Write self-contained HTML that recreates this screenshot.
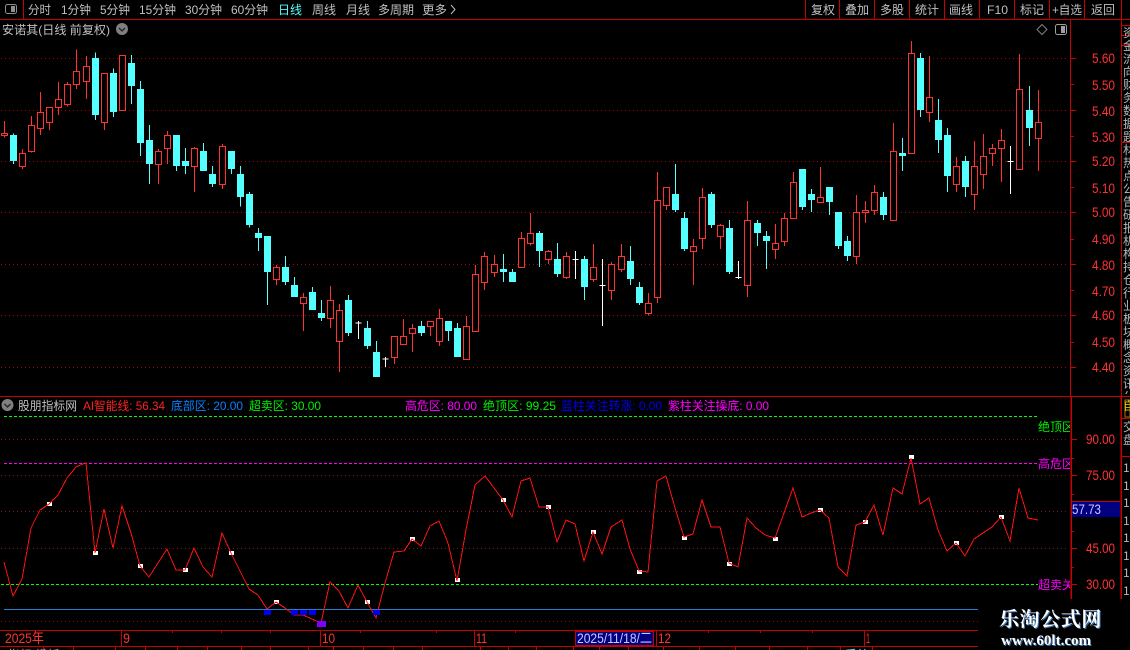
<!DOCTYPE html>
<html>
<head>
<meta charset="utf-8">
<style>
html,body{margin:0;padding:0;background:#000;width:1130px;height:650px;overflow:hidden}
svg{position:absolute;left:0;top:0}
text{font-family:"Liberation Sans","Noto Sans CJK SC",sans-serif;font-size:12px}
.t{fill:#c0c0c0}
.d{font-size:14px;fill:#ff3232}
.col{position:absolute;left:1123px;width:7px;overflow:hidden;font:12px/13px "Noto Sans CJK SC",sans-serif;color:#b8b8b8}
.col div{width:12px;word-break:break-all}
.wm{position:absolute;left:999px;top:606px;width:110px;font:bold 20px/24px "Noto Serif CJK SC","Noto Sans CJK SC",serif;color:#fff;text-shadow:1px 1px 0 #3a78b8;white-space:nowrap;letter-spacing:.6px}
.wm2{position:absolute;left:1001px;top:634px;font:bold 15px/15px "Liberation Serif",serif;color:#fff;text-shadow:1px 1px 0 #3a78b8;white-space:nowrap}
</style>
</head>
<body>
<svg width="1130" height="650" viewBox="0 0 1130 650" xmlns="http://www.w3.org/2000/svg">
<defs>
<clipPath id="c1"><rect x="0" y="400" width="1070" height="200"/></clipPath>
</defs>

<!-- upper grid -->
<g stroke="#a80000" stroke-width="1" stroke-dasharray="1 3" shape-rendering="crispEdges">
<path d="M1 58.5H1066M1 110.5H1066M1 161.5H1066M1 212.5H1066M1 264.5H1066M1 315.5H1066M1 367.5H1066"/>
</g>

<!-- candles -->
<g shape-rendering="crispEdges" fill="none">
<g transform="translate(0,0) scale(.33333) translate(.5,0)">
<path stroke="#ff3232" stroke-width="3" d="M13 363V413M67 447V507M94 348V458M121 276V405M148 322V390M175 246V345M202 246V320M229 148V267M259 168V297M313 220V390M367 166V332M475 447V552M502 393V492M583 441V576M667 432V567"/>
<path stroke="#ff3232" stroke-width="3" fill="#000" d="M13 400m-9 0h18V407h-18zM67 460m-9 0h18V500h-18zM94 376m-9 0h18V455h-18zM121 337m-9 0h18V386h-18zM148 322m-9 0h18V368h-18zM175 298m-9 0h18V323h-18zM202 253m-9 0h18V314h-18zM229 214m-9 0h18V254h-18zM259 199m-9 0h18V245h-18zM313 220m-9 0h18V368h-18zM367 166m-9 0h18V332h-18zM475 454m-9 0h18V494h-18zM502 406m-9 0h18V446h-18zM583 445m-9 0h18V500h-18zM667 439m-9 0h18V554h-18z"/>
<path stroke="#54ffff" stroke-width="3" d="M40 400V492M286 158V360M340 205V351M394 165V312M421 243V468M448 375V552M529 405V513M556 444V522M610 429V513M637 498V561M694 453V522M721 498V620M748 576V683"/>
<path stroke="#54ffff" stroke-width="21" d="M40 405V483M286 174V345M340 219V336M394 189V258M421 267V429M448 420V492M529 405V498M556 483V498M610 453V513M637 522V552M694 453V507M721 522V591M748 582V675"/>
</g>
<g transform="translate(240,200) scale(.33333) translate(.5,0)">
<path stroke="#ff3232" stroke-width="3" d="M109 195V255M190 279V393M271 258V384M298 312V516M463 409V492M490 357V434M517 372V456M571 364V408M598 327V438M679 348V479M706 195V395M733 156V270M763 165V231"/>
<path stroke="#ff3232" stroke-width="3" fill="#000" d="M109 202m-9 0h18V239h-18zM190 292m-9 0h18V311h-18zM271 301m-9 0h18V356h-18zM298 331m-9 0h18V425h-18zM463 409m-9 0h18V473h-18zM490 409m-9 0h18V434h-18zM517 385m-9 0h18V401h-18zM571 364m-9 0h18V380h-18zM598 355m-9 0h18V425h-18zM679 379m-9 0h18V479h-18zM706 223m-9 0h18V395h-18zM733 169m-9 0h18V248h-18zM763 193m-9 0h18V218h-18z"/>
<path stroke="#54ffff" stroke-width="3" d="M55 84V153M82 108V315M136 168V255M163 231V291M217 261V330M244 300V363M325 285V408M382 363V447M409 423V531M544 363V408M625 363V423M652 369V471"/>
<path stroke="#54ffff" stroke-width="21" d="M55 99V114M82 108V216M136 201V246M163 255V291M217 276V330M244 339V354M325 300V399M382 384V438M409 456V531M544 378V399M625 363V393M652 384V471"/>
<path stroke="#fff" stroke-width="3" d="M355 363V417M346 369H364M436 471V501M427 477H445"/>
</g>
<g transform="translate(480,140) scale(.33333) translate(.5,0)">
<path stroke="#ff3232" stroke-width="3" d="M124 276V383M151 219V317M205 330V372M259 336V417M340 312V426M394 366V480M424 312V396M505 459V526M532 96V489M559 142V210M640 297V435M667 144V327M721 252V327M802 183V471M886 252V357"/>
<path stroke="#ff3232" stroke-width="3" fill="#000" d="M124 295m-9 0h18V383h-18zM151 280m-9 0h18V311h-18zM205 334m-9 0h18V359h-18zM259 349m-9 0h18V413h-18zM340 382m-9 0h18V419h-18zM394 373m-9 0h18V452h-18zM424 349m-9 0h18V389h-18zM505 490m-9 0h18V521h-18zM532 181m-9 0h18V473h-18zM559 142m-9 0h18V197h-18zM640 319m-9 0h18V335h-18zM667 172m-9 0h18V296h-18zM721 256m-9 0h18V290h-18zM802 241m-9 0h18V437h-18zM886 310m-9 0h18V329h-18z"/>
<path stroke="#54ffff" stroke-width="3" d="M70 342V426M97 387V426M178 273V381M232 309V411M313 348V480M451 318V435M478 426V495M586 72V216M613 216V333M694 156V264M748 240V402M832 240V318M859 273V387"/>
<path stroke="#54ffff" stroke-width="21" d="M70 387V396M97 396V426M178 279V333M232 357V402M313 357V441M451 363V417M478 441V489M586 162V210M613 234V327M694 162V255M748 264V396M832 249V279M859 288V303"/>
<path stroke="#fff" stroke-width="3" d="M286 333V417M277 358H295M367 357V558M358 436H376M775 363V417M766 412H784"/>
</g>
<g transform="translate(780,120) scale(.33333) translate(.5,0)">
<path stroke="#ff3232" stroke-width="3" d="M13 279V378M40 156V296M121 141V248M229 225V432M256 243V309M283 195V285M340 9V302"/>
<path stroke="#ff3232" stroke-width="3" fill="#000" d="M13 295m-9 0h18V365h-18zM40 187m-9 0h18V296h-18zM121 232m-9 0h18V248h-18zM229 277m-9 0h18V410h-18zM256 271m-9 0h18V278h-18zM283 217m-9 0h18V272h-18zM340 94m-9 0h18V302h-18z"/>
<path stroke="#54ffff" stroke-width="3" d="M67 147V270M94 207V276M148 201V285M175 276V387M202 348V423M310 216V300M367 54V153"/>
<path stroke="#54ffff" stroke-width="21" d="M67 147V261M94 222V240M148 201V246M175 276V378M202 363V408M310 231V285M367 99V108"/>
</g>
<g transform="translate(780,0) scale(.33333) translate(.5,0)">
<path stroke="#ff3232" stroke-width="3" d="M394 123V461M448 168V366M529 471V576M583 423V630M610 402V567M637 432V498M664 387V546M718 162V509M775 270V513"/>
<path stroke="#ff3232" stroke-width="3" fill="#000" d="M394 160m-9 0h18V461h-18zM448 292m-9 0h18V338h-18zM529 499m-9 0h18V554h-18zM583 499m-9 0h18V584h-18zM610 469m-9 0h18V524h-18zM637 445m-9 0h18V461h-18zM664 421m-9 0h18V446h-18zM718 268m-9 0h18V509h-18zM775 367m-9 0h18V415h-18z"/>
<path stroke="#54ffff" stroke-width="3" d="M421 159V351M475 297V459M502 384V576M556 468V591M748 258V438"/>
<path stroke="#54ffff" stroke-width="21" d="M421 174V330M475 360V420M502 405V528M556 483V561M748 330V384"/>
<path stroke="#fff" stroke-width="3" d="M691 438V582M682 484H700"/>
</g>
</g>

<!-- frame lines -->
<g stroke="#c80000" stroke-width="1" shape-rendering="crispEdges" fill="none">
<path d="M0 19.5H1130"/>
<path d="M23.5 0V19M805.5 0V19M839.5 0V19M874.5 0V19M909.5 0V19M944.5 0V19M979.5 0V19M1014.5 0V19M1049.5 0V19M1084.5 0V19M1121.5 0V396"/>
<path d="M1070.5 19V396"/>
<path d="M0 396.5H1130"/>
<path d="M1122 25.5H1130M1122 35.5H1130M1122 45.5H1130M1122 142.5H1130M1122 418.5H1130M1122 456.5H1130"/>
<path d="M1071 58.5H1076M1071 84.5H1074M1071 110.5H1076M1071 136.5H1074M1071 161.5H1076M1071 187.5H1074M1071 212.5H1076M1071 239.5H1074M1071 264.5H1076M1071 290.5H1074M1071 315.5H1076M1071 342.5H1074M1071 367.5H1076"/>
<path stroke-width="1.5" d="M1071 397V599M1121 397V599"/>
<path d="M1071 439.5H1077M1071 458.5H1074M1071 475.5H1077M1071 494.5H1074M1071 531.5H1074M1071 548.5H1077M1071 567.5H1074M1071 584.5H1077"/>
<path d="M0 630.5H978M0 646.5H978"/>
<path d="M121.5 630V646M320.5 630V646M474.5 630V646M656.5 630V646M864.5 630V646"/>
<path d="M172.5 630V633M221.5 630V633M270.5 630V633M360.5 630V633M436.5 630V633M515.5 630V633M708.5 630V633M760.5 630V633M812.5 630V633"/>
<path d="M43.5 646V650M73.5 646V650M115.5 646V650M145.5 646V650M177.5 646V650M207.5 646V650M241.5 646V650M270.5 646V650M308.5 646V650M333.5 646V650M363.5 646V650M393.5 646V650M422.5 646V650M480.5 646V650M508.5 646V650M536.5 646V650M573.5 646V650M599.5 646V650M628.5 646V650M663.5 646V650M699.5 646V650M735.5 646V650M769.5 646V650M807.5 646V650M840.5 646V650M872.5 646V650"/>
</g>

<!-- top toolbar icon -->
<rect x="5.5" y="4.5" width="11" height="9" rx="2" fill="#000" stroke="#909090"/>
<rect x="11" y="6" width="4" height="6" fill="#909090"/>
<!-- toolbar text -->
<g class="t">
<text x="28" y="14" textLength="23" lengthAdjust="spacingAndGlyphs">分时</text>
<text x="61" y="14" textLength="30" lengthAdjust="spacingAndGlyphs">1分钟</text>
<text x="100" y="14" textLength="30" lengthAdjust="spacingAndGlyphs">5分钟</text>
<text x="139" y="14" textLength="37" lengthAdjust="spacingAndGlyphs">15分钟</text>
<text x="185" y="14" textLength="37" lengthAdjust="spacingAndGlyphs">30分钟</text>
<text x="231" y="14" textLength="37" lengthAdjust="spacingAndGlyphs">60分钟</text>
<text x="278" y="14" textLength="24" lengthAdjust="spacingAndGlyphs" style="fill:#54ffff">日线</text>
<text x="312" y="14" textLength="24" lengthAdjust="spacingAndGlyphs">周线</text>
<text x="346" y="14" textLength="24" lengthAdjust="spacingAndGlyphs">月线</text>
<text x="378" y="14" textLength="36" lengthAdjust="spacingAndGlyphs">多周期</text>
<text x="422" y="14" textLength="25" lengthAdjust="spacingAndGlyphs">更多</text>
<text x="811" y="14" textLength="24" lengthAdjust="spacingAndGlyphs">复权</text>
<text x="845" y="14" textLength="24" lengthAdjust="spacingAndGlyphs">叠加</text>
<text x="880" y="14" textLength="24" lengthAdjust="spacingAndGlyphs">多股</text>
<text x="915" y="14" textLength="24" lengthAdjust="spacingAndGlyphs">统计</text>
<text x="949" y="14" textLength="24" lengthAdjust="spacingAndGlyphs">画线</text>
<text x="987" y="14" textLength="21" lengthAdjust="spacingAndGlyphs">F10</text>
<text x="1020" y="14" textLength="24" lengthAdjust="spacingAndGlyphs">标记</text>
<text x="1052" y="14" textLength="30" lengthAdjust="spacingAndGlyphs">+自选</text>
<text x="1091" y="14" textLength="24" lengthAdjust="spacingAndGlyphs">返回</text>
<text x="2" y="34" textLength="108" lengthAdjust="spacingAndGlyphs">安诺其(日线 前复权)</text>
</g>
<path d="M451 5L455 9.5L451 14" fill="none" stroke="#c0c0c0"/>
<circle cx="122" cy="29" r="6" fill="#808080"/>
<path d="M119 28L122 31L125 28" fill="none" stroke="#222" stroke-width="1.3"/>
<path d="M1042 24.5L1047 29.5L1042 34.5L1037 29.5Z" fill="none" stroke="#808080"/>
<rect x="1055.5" y="24.5" width="11" height="10" rx="2" fill="none" stroke="#a0a0a0"/>
<rect x="1061" y="26" width="4" height="7" fill="#a0a0a0"/>

<!-- upper price labels -->
<g class="d">
<text x="1092" y="63" textLength="23" lengthAdjust="spacingAndGlyphs" class="d">5.60</text>
<text x="1092" y="90" textLength="23" lengthAdjust="spacingAndGlyphs" class="d">5.50</text>
<text x="1092" y="116" textLength="23" lengthAdjust="spacingAndGlyphs" class="d">5.40</text>
<text x="1092" y="142" textLength="23" lengthAdjust="spacingAndGlyphs" class="d">5.30</text>
<text x="1092" y="166" textLength="23" lengthAdjust="spacingAndGlyphs" class="d">5.20</text>
<text x="1092" y="193" textLength="23" lengthAdjust="spacingAndGlyphs" class="d">5.10</text>
<text x="1092" y="217" textLength="23" lengthAdjust="spacingAndGlyphs" class="d">5.00</text>
<text x="1092" y="244" textLength="23" lengthAdjust="spacingAndGlyphs" class="d">4.90</text>
<text x="1092" y="270" textLength="23" lengthAdjust="spacingAndGlyphs" class="d">4.80</text>
<text x="1092" y="296" textLength="23" lengthAdjust="spacingAndGlyphs" class="d">4.70</text>
<text x="1092" y="320" textLength="23" lengthAdjust="spacingAndGlyphs" class="d">4.60</text>
<text x="1092" y="347" textLength="23" lengthAdjust="spacingAndGlyphs" class="d">4.50</text>
<text x="1092" y="372" textLength="23" lengthAdjust="spacingAndGlyphs" class="d">4.40</text>
</g>

<!-- lower legend -->
<circle cx="7.5" cy="405" r="6" fill="#808080"/>
<path d="M4.5 404L7.5 407L10.5 404" fill="none" stroke="#222" stroke-width="1.3"/>
<text x="18" y="410" textLength="59" lengthAdjust="spacingAndGlyphs" fill="#c0c0c0">股朋指标网</text>
<text x="83" y="410" textLength="82" lengthAdjust="spacingAndGlyphs" fill="#ff2020">AI智能线: 56.34</text>
<text x="171" y="410" textLength="72" lengthAdjust="spacingAndGlyphs" fill="#0a80ff">底部区: 20.00</text>
<text x="249" y="410" textLength="72" lengthAdjust="spacingAndGlyphs" fill="#00f000">超卖区: 30.00</text>
<text x="405" y="410" textLength="72" lengthAdjust="spacingAndGlyphs" fill="#ff00ff">高危区: 80.00</text>
<text x="483" y="410" textLength="73" lengthAdjust="spacingAndGlyphs" fill="#00f000">绝顶区: 99.25</text>
<text x="561" y="410" textLength="101" lengthAdjust="spacingAndGlyphs" fill="#0000f0">蓝柱关注转涨: 0.00</text>
<text x="668" y="410" textLength="101" lengthAdjust="spacingAndGlyphs" fill="#ff00ff">紫柱关注操底: 0.00</text>

<!-- lower grid -->
<g stroke="#7c1414" stroke-dasharray="1 3" shape-rendering="crispEdges">
<path d="M1 439.5H1068M1 475.5H1068M1 511.5H1068M1 548.5H1068M1 621.5H978"/>
</g>
<g stroke-dasharray="3 2" shape-rendering="crispEdges">
<path stroke="#00ff00" d="M4 416.5H1038M1 584.5H1038"/>
<path stroke="#ff00ff" d="M4 463.5H1038"/>
</g>
<path d="M4 609.5H978" stroke="#2080d0" shape-rendering="crispEdges"/>

<!-- markers -->
<g fill="#fff" shape-rendering="crispEdges">
<rect x="47" y="502" width="5" height="4"/><rect x="93" y="551" width="5" height="4"/><rect x="138" y="564" width="5" height="4"/><rect x="183" y="568" width="5" height="4"/><rect x="229" y="551" width="5" height="4"/><rect x="274" y="600" width="5" height="4"/><rect x="365" y="600" width="5" height="4"/><rect x="410" y="537" width="5" height="4"/><rect x="455" y="578" width="5" height="4"/><rect x="501" y="498" width="5" height="4"/><rect x="546" y="505" width="5" height="4"/><rect x="591" y="530" width="5" height="4"/><rect x="637" y="570" width="5" height="4"/><rect x="682" y="536" width="5" height="4"/><rect x="727" y="562" width="5" height="4"/><rect x="773" y="537" width="5" height="4"/><rect x="818" y="508" width="5" height="4"/><rect x="863" y="520" width="5" height="4"/><rect x="909" y="455" width="5" height="4"/><rect x="954" y="541" width="5" height="4"/><rect x="999" y="515" width="5" height="4"/>
</g>

<!-- indicator line -->
<polyline fill="none" stroke="#ff1010" stroke-width="1" shape-rendering="crispEdges" points="4,562 13,596 22,579 31,528 40,510 49,504 58,495 67,478 76,467 85,463 86,463 95,553 104,509 113,548 122,506 131,533 140,566 149,577 158,563 167,549 176,570 185,570 194,548 203,567 212,577 222,533 231,553 240,571 249,589 258,595 267,609 276,602 285,608 294,615 303,615 312,619 321,623 330,582 339,591 348,608 358,585 367,602 376,618 385,583 394,552 404,551 412,539 421,546 430,526 439,521 448,543 457,581 466,530 475,485 485,476 494,488 503,500 512,517 521,481 530,478 539,507 548,507 557,542 566,520 575,524 584,561 593,532 602,554 611,527 622,520 630,549 639,571 648,572 657,481 666,476 675,508 684,537 693,534 702,500 711,527 720,527 729,563 738,567 747,518 756,528 765,535 775,538 793,488 802,517 811,513 820,510 829,518 838,567 847,576 856,525 865,522 874,505 883,535 893,488 902,494 911,458 920,504 929,498 938,530 947,551 956,543 965,556 974,539 983,533 992,527 1001,517 1010,541 1019,488 1028,518 1038,520"/>

<!-- blue / purple squares -->
<g shape-rendering="crispEdges">
<path fill="#0000f0" d="M264 610h7v5h-7zM291 610h7v5h-7zM300 610h7v5h-7zM309 610h7v5h-7zM373 610h7v5h-7z"/>
<rect x="317" y="621" width="9" height="6" fill="#8000ff"/>
</g>

<!-- end labels -->
<g clip-path="url(#c1)">
<text x="1038" y="431" fill="#00f000">绝顶区</text>
<text x="1038" y="468" fill="#ff00ff">高危区</text>
<text x="1038" y="589" fill="#ff00ff">超卖关</text>
</g>

<!-- lower axis labels -->
<text x="1086" y="444" class="d" textLength="29" lengthAdjust="spacingAndGlyphs">90.00</text>
<text x="1086" y="480" class="d" textLength="29" lengthAdjust="spacingAndGlyphs">75.00</text>
<text x="1086" y="553" class="d" textLength="29" lengthAdjust="spacingAndGlyphs">45.00</text>
<text x="1086" y="589" class="d" textLength="29" lengthAdjust="spacingAndGlyphs">30.00</text>
<rect x="1072" y="502" width="48" height="15" fill="#000080"/>
<path d="M1072 501.5H1120" stroke="#c80000" shape-rendering="crispEdges"/>
<text x="1072" y="514" style="font-size:14px" fill="#c8c8ff" textLength="29" lengthAdjust="spacingAndGlyphs">57.73</text>

<!-- time axis labels -->
<text x="5" y="643" class="d" textLength="39" lengthAdjust="spacingAndGlyphs">2025年</text>
<text x="123" y="643" class="d" textLength="7" lengthAdjust="spacingAndGlyphs">9</text>
<text x="322" y="643" class="d" textLength="13" lengthAdjust="spacingAndGlyphs">10</text>
<text x="476" y="643" class="d" textLength="11" lengthAdjust="spacingAndGlyphs">11</text>
<text x="658" y="643" class="d" textLength="13" lengthAdjust="spacingAndGlyphs">12</text>
<text x="866" y="643" class="d" textLength="4" lengthAdjust="spacingAndGlyphs">1</text>
<rect x="575.5" y="631.5" width="78" height="14" fill="#000080" stroke="#c80000" shape-rendering="crispEdges"/>
<text x="577" y="643" fill="#c8c8ff" style="font-size:14px" textLength="75" lengthAdjust="spacingAndGlyphs">2025/11/18/二</text>

<!-- bottom row clipped text -->
<text x="8" y="659" fill="#b0b0b0">指标 模板</text>
<text x="845" y="659" fill="#54ffff">系统</text>

<!-- right strip bottom -->
<rect x="1125" y="400" width="5" height="17" fill="none" stroke="#a08000"/>
<rect x="978" y="600" width="152" height="50" fill="#000"/>
</svg>

<div class="col" style="top:26px;height:368px"><div>资金流向财务数据题材热点公告研报机构持仓行业板块概念资讯分析诊断股东龙虎榜融资融券大宗交易走势盘口</div></div>
<div class="col" style="top:399px;height:18px;color:#e0c000"><div>自</div></div>
<div class="col" style="top:420px;height:36px"><div>交盘</div></div>
<div class="col" style="top:459px;height:140px;line-height:17.5px"><div>11111111</div></div>

<div class="wm">乐淘公式网</div>
<div class="wm2">www.60lt.com</div>
</body>
</html>
